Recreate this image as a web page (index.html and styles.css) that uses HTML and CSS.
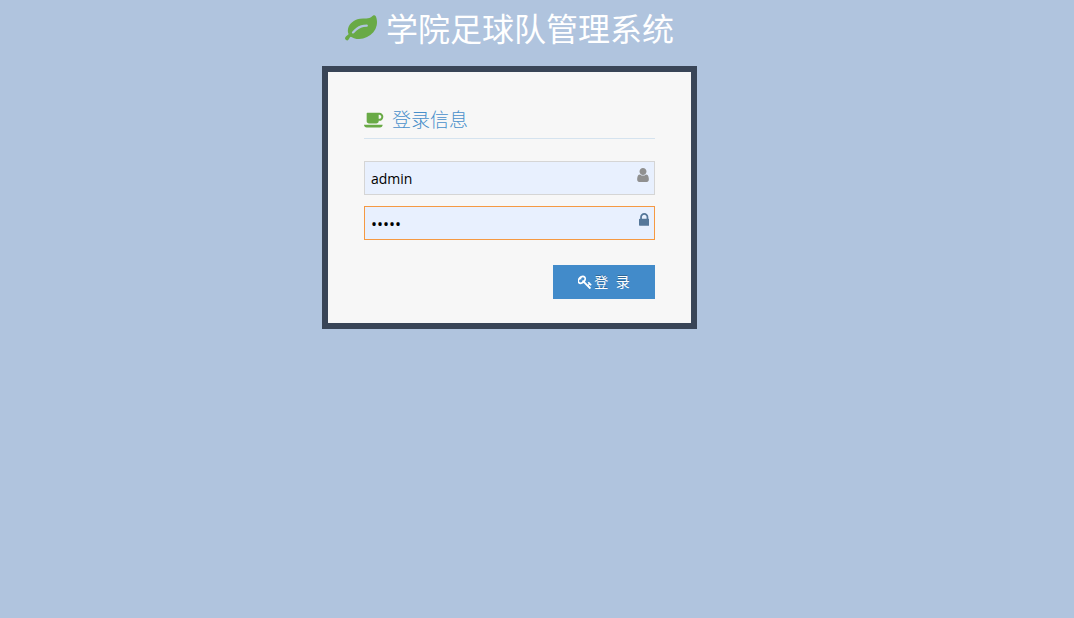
FILE: index.html
```html
<!DOCTYPE html>
<html lang="zh-CN">
<head>
<meta charset="utf-8">
<meta name="viewport" content="width=device-width, initial-scale=1">
<title>学院足球队管理系统</title>
<link rel="stylesheet" href="styles.css">
</head>
<body>
<main class="login">
  <h1 class="brand">
    <svg class="brand-icon" viewBox="0 0 1792 1792" aria-hidden="true"><path d="M1280 704q0-26-19-45t-45-19q-172 0-318 49.500t-259.500 134-235.500 219.500q-19 21-19 45 0 26 19 45t45 19q24 0 45-19 27-24 74-71t67-66q137-124 268.500-176t313.500-52q26 0 45-19t19-45zm512-198q0 95-20 193-46 224-184.500 383t-357.500 268q-214 108-438 108-148 0-286-47-15-5-88-42t-96-37q-16 0-39.500 32t-45 70-52.500 70-60 32q-43 0-63.500-17.500t-45.500-59.500q-2-4-6-11t-5.500-10-3-9.500-1.500-13.500q0-35 31-73.500t68-65.500 68-56 31-48q0-4-14-38t-16-44q-9-51-9-104 0-115 43.500-220t119-184.500 170.500-139 204-95.500q55-18 145-25.500t179.500-9 178.500-6 163.500-24 113.500-56.500l29.500-29.500 29.500-28 27-20 36.500-16 43.500-4.500q39 0 70.500 46t47.500 112 24 124 8 96z"/></svg>
    <span>学院足球队管理系统</span>
  </h1>
  <form class="panel">
    <h2 class="panel-title">
      <svg class="panel-icon" viewBox="0 0 1920 1792" aria-hidden="true"><path d="M1664 640q0-80-56-136t-136-56h-64v384h64q80 0 136-56t56-136zm-1664 768h1792q0 106-75 181t-181 75h-1280q-106 0-181-75t-75-181zm1856-768q0 159-112.500 271.500t-271.500 112.500h-64v32q0 92-66 158t-158 66h-704q-92 0-158-66t-66-158v-736q0-26 19-45t45-19h1152q159 0 271.500 112.500t112.500 271.500z"/></svg>
      <span>登录信息</span>
    </h2>
    <label class="field">
      <input class="field-input" type="text" aria-label="用户名" value="admin">
      <svg class="field-icon" viewBox="128 128 1408 1536" aria-hidden="true"><path d="M1536 1399q0 109-62.500 187t-150.500 78h-854q-88 0-150.500-78t-62.500-187q0-85 8.500-160.500t31.500-152 58.500-131 94-89 134.500-34.500q131 128 313 128t313-128q76 0 134.500 34.500t94 89 58.500 131 31.500 152 8.500 160.500zm-256-887q0 159-112.500 271.500t-271.500 112.500-271.500-112.500-112.500-271.500 112.500-271.500 271.500-112.500 271.500 112.500 112.500 271.500z"/></svg>
    </label>
    <label class="field field-active">
      <input class="field-input" type="password" aria-label="密码" value="admin">
      <svg class="field-icon" viewBox="320 128 1152 1536" aria-hidden="true"><path d="M640 768h512v-192q0-106-75-181t-181-75-181 75-75 181v192zm832 96v576q0 40-28 68t-68 28h-960q-40 0-68-28t-28-68v-576q0-40 28-68t68-28h32v-192q0-184 132-316t316-132 316 132 132 316v192h32q40 0 68 28t28 68z"/></svg>
    </label>
    <button class="submit" type="button">
      <svg class="submit-icon" viewBox="64 64 1664 1664" aria-hidden="true"><path d="M832 512q0-80-56-136t-136-56-136 56-56 136q0 42 19 83-41-19-83-19-80 0-136 56t-56 136 56 136 136 56 136-56 56-136q0-42-19-83 41 19 83 19 80 0 136-56t56-136zm851 704q0 17-49 66t-66 49q-9 0-28.500-16t-36.500-33-38.500-40-24.500-26l-96 96 220 220q28 28 28 68 0 42-39 81t-81 39q-40 0-68-28l-671-671q-176 131-365 131-163 0-265.500-102.500t-102.500-265.500q0-160 95-313t248-248 313-95q163 0 265.500 102.500t102.500 265.500q0 189-131 365l355 355 96-96q-3-3-26-24.500t-40-38.500-33-36.500-16-28.500q0-17 49-66t66-49q13 0 23 10 6 6 46 44.500t82 79.500 86.500 86 73 78 28.500 41z"/></svg>
      <span>登&nbsp; 录</span>
    </button>
  </form>
</main>
</body>
</html>
```
FILE: styles.css
```css
* {
  box-sizing: border-box;
}

body {
  margin: 0;
  padding: 0 55px 0 0;
  background: #b0c4de;
  color: #393939;
  font-family: "Open Sans", "Noto Sans CJK SC", sans-serif;
  font-size: 14px;
}

svg {
  display: block;
  flex: none;
  fill: currentColor;
}

.login {
  max-width: 375px;
  margin: 0 auto;
}

.brand {
  display: flex;
  align-items: center;
  justify-content: center;
  gap: 9px;
  margin: 0 0 8px;
  color: #fff;
  font-size: 32px;
  font-weight: 400;
  line-height: 58px;
}

.brand-icon {
  width: 32px;
  height: 32px;
  color: #69aa46;
}

.panel {
  display: flex;
  flex-direction: column;
  padding: 36px 36px 24px;
  border: 6px solid #394557;
  background: #f7f7f7;
}

.panel-title {
  display: flex;
  align-items: flex-start;
  gap: 8px;
  margin: 0 0 22px;
  padding-bottom: 6px;
  border-bottom: 1px solid #d5e3ef;
  color: #478fca;
  font-size: 19px;
  font-weight: 300;
  line-height: 24px;
}

.panel-icon {
  width: 20px;
  height: 23px;
  color: #69aa46;
}

.field {
  position: relative;
  display: block;
  margin-bottom: 11px;
  color: #909090;
}

.field-input {
  display: block;
  width: 100%;
  height: 34px;
  padding: 5px 24px 4px 6px;
  border: 1px solid #d5d5d5;
  border-radius: 0;
  outline: 0;
  background: #e8f0fe;
  color: #000;
  font: inherit;
}

.field-icon {
  position: absolute;
  top: 7px;
  right: 6px;
  height: 14px;
}

.field-active {
  margin-bottom: 25px;
  color: #557799;
}

.field-active .field-input {
  border-color: #f59942;
  font-size: 16px;
}

.submit {
  display: flex;
  align-items: center;
  align-self: flex-end;
  justify-content: center;
  gap: 2px;
  width: 102px;
  height: 34px;
  padding: 0 0 1px;
  border: 0;
  background: #428bca;
  color: #fff;
  font: inherit;
  line-height: 20px;
  text-shadow: 0 -1px 0 rgba(0, 0, 0, 0.25);
}

.submit-icon {
  width: 14px;
  height: 14px;
}
```
